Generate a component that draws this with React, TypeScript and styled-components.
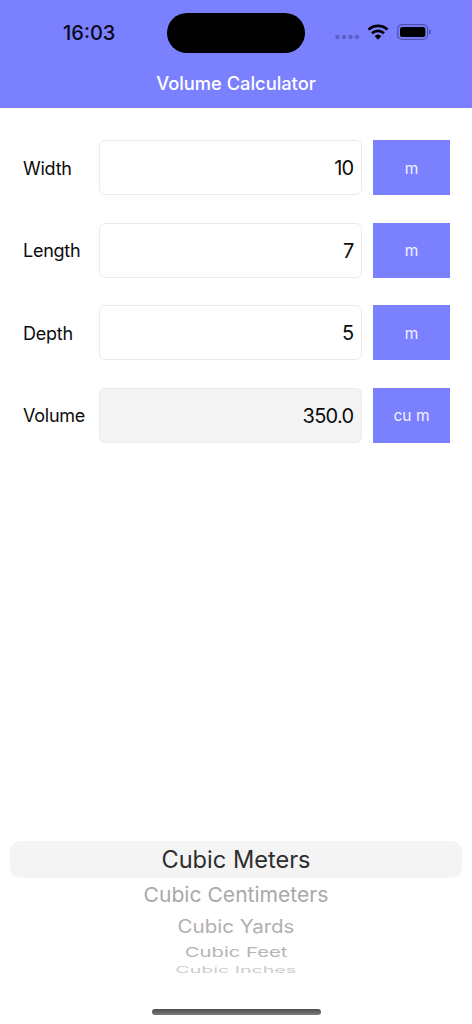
import React from "react";
import styled, { createGlobalStyle } from "styled-components";

const FONT = `Inter, "Liberation Sans", sans-serif`;
const ACCENT = "#7b80ff";

const GlobalStyle = createGlobalStyle`
  html, body {
    margin: 0;
    padding: 0;
    background: #fff;
    font-family: ${FONT};
  }
`;

const Page = styled.div`
  width: 472px;
  height: 1024px;
  display: flex;
  flex-direction: column;
  overflow: hidden;
  background: #fff;
`;

const Header = styled.header`
  height: 108px;
  flex: none;
  background: ${ACCENT};
  display: flex;
  flex-direction: column;
`;

const StatusBar = styled.div`
  height: 40px;
  margin-top: 13px;
  display: flex;
  align-items: center;
`;

const Time = styled.div`
  width: 167px;
  padding-left: 63px;
  box-sizing: border-box;
  font-size: 20px;
  font-weight: 500;
  line-height: 40px;
  color: #0a0a1a;
`;

const Island = styled.div`
  width: 138px;
  height: 40px;
  flex: none;
  border-radius: 20px;
  background: #000;
`;

const StatusIcons = styled.div`
  display: flex;
  align-items: center;
  margin-left: 30px;
  margin-top: -3px;
`;

const Title = styled.h1`
  margin: 8px 0 0;
  font-size: 18.3px;
  font-weight: 500;
  line-height: 44px;
  text-align: center;
  color: #fff;
`;

const Form = styled.div`
  display: flex;
  flex-direction: column;
  gap: 27.5px;
  padding: 32px 22px 0 23px;
`;

const Row = styled.div`
  display: flex;
  align-items: center;
  height: 55px;
`;

const Label = styled.div`
  width: 76px;
  flex: none;
  padding-top: 1px;
  font-size: 18px;
  letter-spacing: -0.25px;
  color: #0c0c0c;
`;

const Field = styled.div<{ $readOnly?: boolean }>`
  width: 263px;
  height: 55px;
  flex: none;
  box-sizing: border-box;
  display: flex;
  align-items: center;
  justify-content: flex-end;
  padding: 1px 7.5px 0 0;
  border: 1px solid #ebebeb;
  border-radius: 6px;
  background: ${(p) => (p.$readOnly ? "#f4f4f4" : "#fff")};
  font-size: 20px;
  letter-spacing: -0.7px;
  color: #0c0c0c;
`;

const UnitButton = styled.div`
  width: 77px;
  height: 55px;
  flex: none;
  box-sizing: border-box;
  margin-left: 11px;
  padding-top: 1px;
  display: flex;
  align-items: center;
  justify-content: center;
  background: ${ACCENT};
  font-size: 15.5px;
  color: #f2f2ff;
`;

const Picker = styled.div`
  margin-top: auto;
  position: relative;
  display: flex;
  flex-direction: column;
  align-items: center;
  height: 136px;
`;

const PickerHighlight = styled.div`
  position: absolute;
  left: 10px;
  right: 10px;
  top: 0;
  height: 37px;
  border-radius: 10px;
  background: #f4f4f4;
`;

const PickerItem = styled.div<{
  $size: number;
  $color: string;
  $height: number;
  $scaleX?: number;
  $scaleY?: number;
}>`
  position: relative;
  height: ${(p) => p.$height}px;
  line-height: ${(p) => p.$height}px;
  font-size: ${(p) => p.$size}px;
  color: ${(p) => p.$color};
  white-space: nowrap;
  transform: scale(${(p) => p.$scaleX ?? 1}, ${(p) => p.$scaleY ?? 1});
`;

const HomeBar = styled.div`
  width: 169px;
  height: 6px;
  flex: none;
  margin: 32px auto 9px;
  border-radius: 3px;
  background: linear-gradient(#4d4d4d, #7a7a7a);
`;

const rows = [
  { label: "Width", value: "10", unit: "m" },
  { label: "Length", value: "7", unit: "m" },
  { label: "Depth", value: "5", unit: "m" },
  { label: "Volume", value: "350.0", unit: "cu m", readOnly: true },
];

const SignalDots = () => (
  <svg width="25" height="6" viewBox="0 0 25 6" style={{ marginTop: 11 }}>
    {[2.5, 9, 15.5, 22].map((cx) => (
      <circle key={cx} cx={cx} cy="3" r="2.3" fill="#5f62c4" />
    ))}
  </svg>
);

const Wifi = () => (
  <svg width="22" height="16" viewBox="0 0 22 16" style={{ marginLeft: 7 }}>
    <path
      d="M1.5 5.6 A14 14 0 0 1 20.5 5.6"
      fill="none"
      stroke="#000"
      strokeWidth="2.6"
    />
    <path
      d="M5 9.2 A9 9 0 0 1 17 9.2"
      fill="none"
      stroke="#000"
      strokeWidth="2.6"
    />
    <path d="M7.6 12 A5 5 0 0 1 14.4 12 L11 15.8 Z" fill="#000" />
  </svg>
);

const Battery = () => (
  <svg width="34" height="16" viewBox="0 0 34 16" style={{ marginLeft: 8 }}>
    <rect x="0.6" y="0.6" width="30" height="14.8" rx="4.4" fill="none" stroke="#4f52ad" strokeWidth="1.2" />
    <rect x="3" y="3" width="25.4" height="10" rx="2.6" fill="#000" />
    <rect x="32" y="5.6" width="1.6" height="4.8" rx="0.8" fill="#4f52ad" />
  </svg>
);

export default function App() {
  return (
    <Page>
      <GlobalStyle />
      <Header>
        <StatusBar>
          <Time>16:03</Time>
          <Island />
          <StatusIcons>
            <SignalDots />
            <Wifi />
            <Battery />
          </StatusIcons>
        </StatusBar>
        <Title>Volume Calculator</Title>
      </Header>
      <Form>
        {rows.map((row) => (
          <Row key={row.label}>
            <Label>{row.label}</Label>
            <Field $readOnly={row.readOnly}>{row.value}</Field>
            <UnitButton>{row.unit}</UnitButton>
          </Row>
        ))}
      </Form>
      <Picker>
        <PickerHighlight />
        <PickerItem $size={23.6} $height={37} $color="#2e2e2e">
          Cubic Meters
        </PickerItem>
        <PickerItem $size={21.1} $height={33} $color="#a9a9a9" $scaleY={0.98}>
          Cubic Centimeters
        </PickerItem>
        <PickerItem $size={20.5} $height={31} $color="#b0b0b0" $scaleY={0.88}>
          Cubic Yards
        </PickerItem>
        <PickerItem $size={17} $height={20} $color="#b4b4b4" $scaleX={1.19} $scaleY={0.8}>
          Cubic Feet
        </PickerItem>
        <PickerItem $size={14.5} $height={15} $color="#cdcdcd" $scaleX={1.35} $scaleY={0.62}>
          Cubic Inches
        </PickerItem>
      </Picker>
      <HomeBar />
    </Page>
  );
}
